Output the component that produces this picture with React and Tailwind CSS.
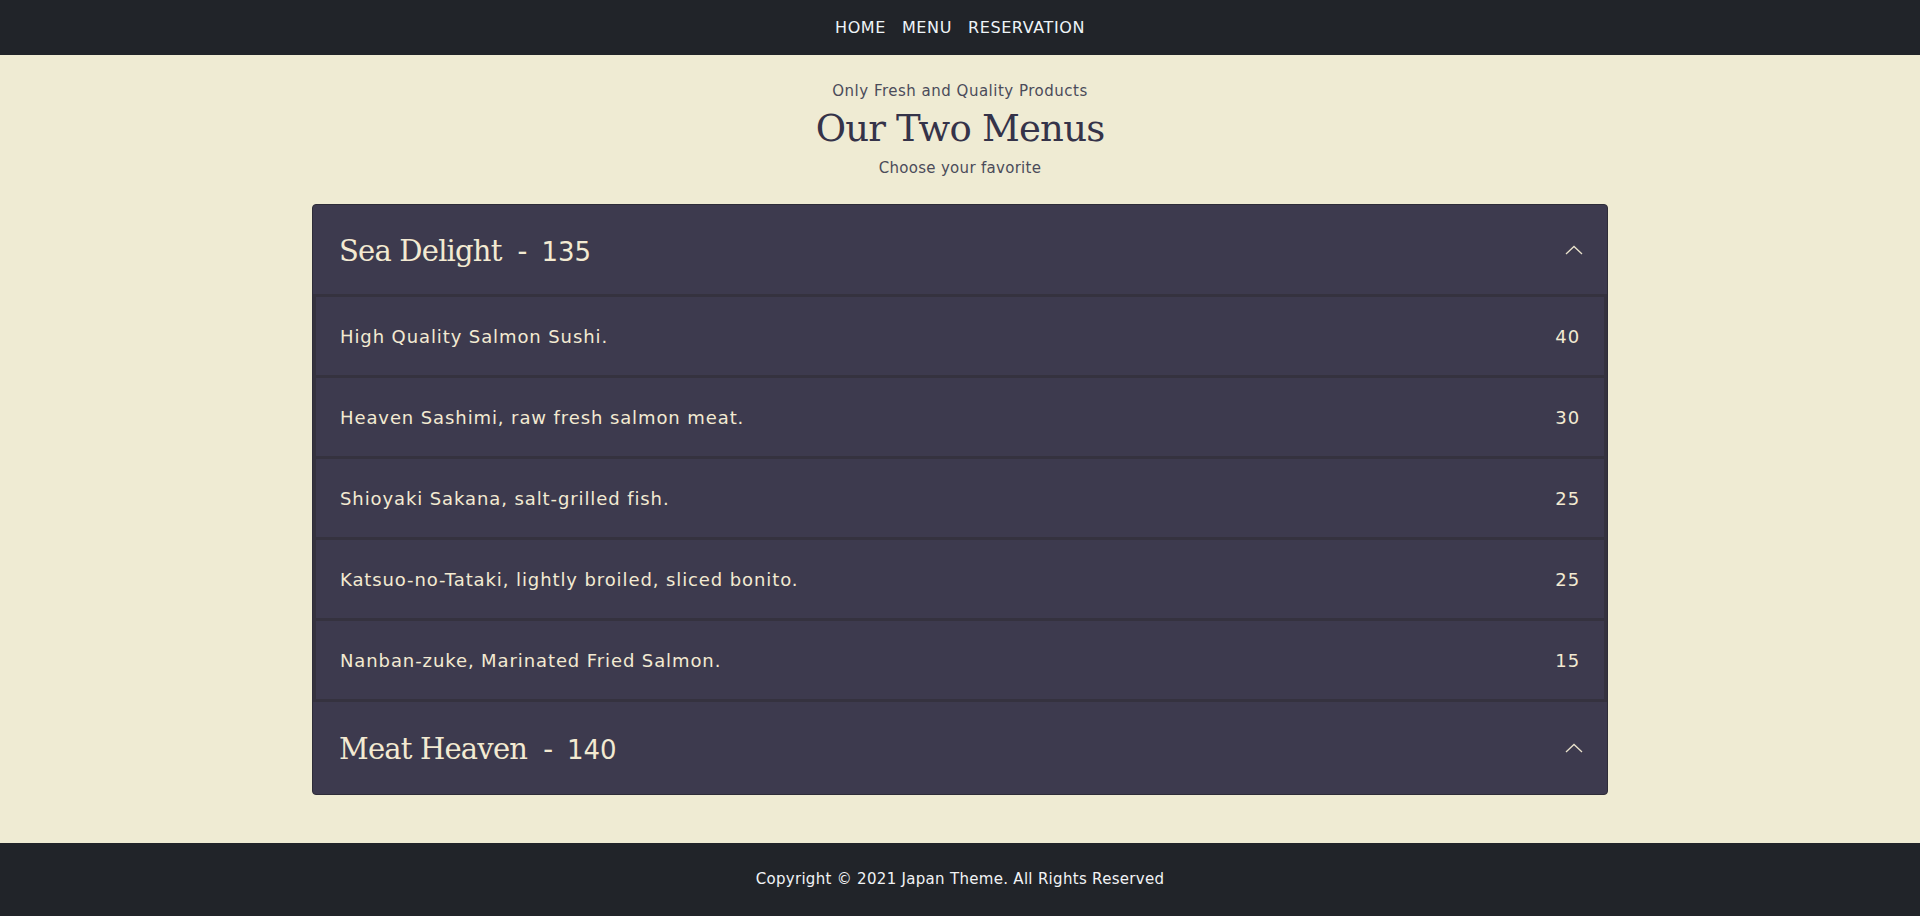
const sans = { fontFamily: "'DejaVu Sans', 'Open Sans', sans-serif" };
const serif = { fontFamily: "'DejaVu Serif', 'Liberation Serif', serif" };

const menus = [
  {
    name: "Sea Delight",
    price: 135,
    items: [
      { name: "High Quality Salmon Sushi.", price: 40 },
      { name: "Heaven Sashimi, raw fresh salmon meat.", price: 30 },
      { name: "Shioyaki Sakana, salt-grilled fish.", price: 25 },
      { name: "Katsuo-no-Tataki, lightly broiled, sliced bonito.", price: 25 },
      { name: "Nanban-zuke, Marinated Fried Salmon.", price: 15 },
    ],
  },
  { name: "Meat Heaven", price: 140, items: [] },
];

const Chevron = () => (
  <svg width="18" height="10" viewBox="0 0 18 10" fill="none" stroke="#e9e2cc" strokeWidth="1.3">
    <path d="M1 9 L9 1.5 L17 9" />
  </svg>
);

const MenuHeader = ({ menu, h }) => (
  <div className={`flex items-center justify-between pl-[26px] pr-[24px] ${h}`}>
    <h3 className="text-[29px] text-[#f3ead2] leading-none pt-[3px]" style={serif}>
      <span className="tracking-[-0.8px]">{menu.name}</span>
      <span className="ml-[16px] mr-[14px]">-</span>
      <span style={sans} className="text-[26px] font-normal">{menu.price}</span>
    </h3>
    <Chevron />
  </div>
);

export default function App() {
  return (
    <div className="min-h-[916px] flex flex-col bg-[#efebd3]" style={sans}>
      <nav className="h-[55px] bg-[#212429] flex items-center justify-center gap-[16px] text-[16px] tracking-[0.6px] text-[#eef4f8] pt-[1px]">
        <a>HOME</a>
        <a>MENU</a>
        <a>RESERVATION</a>
      </nav>

      <main className="flex-1 flex flex-col items-center pb-[47px]">
        <p className="mt-[27px] text-[15px] tracking-[0.5px] text-[#4b4b5a] leading-[18px]">Only Fresh and Quality Products</p>
        <h1 className="mt-[7px] text-[37px] leading-[44px] text-[#353349] tracking-[-0.8px]" style={serif}>
          Our Two Menus
        </h1>
        <p className="mt-[8px] text-[15px] tracking-[0.3px] text-[#4b4b5a] leading-[18px]">Choose your favorite</p>

        <div className="mt-[27px] w-[1296px] rounded-[4px] overflow-hidden bg-[#3d3a4e] border border-[#2e2c38]">
          <MenuHeader menu={menus[0]} h="h-[89px]" />
          <div className="bg-[#35323f] px-[3px] pt-[3px] pb-[3px] flex flex-col gap-[3px]">
            {menus[0].items.map((item, i) => (
              <div key={i} className="h-[78px] bg-[#3d3a4e] flex items-center justify-between px-[24px] text-[18px] tracking-[0.9px] text-[#f3ead2]">
                <span>{item.name}</span>
                <span>{item.price}</span>
              </div>
            ))}
          </div>
          <MenuHeader menu={menus[1]} h="h-[92px]" />
        </div>
      </main>

      <footer className="h-[73px] bg-[#212429] flex items-center justify-center text-[15px] tracking-[0.3px] text-[#f1f3f5]">
        Copyright © 2021 Japan Theme. All Rights Reserved
      </footer>
    </div>
  );
}
